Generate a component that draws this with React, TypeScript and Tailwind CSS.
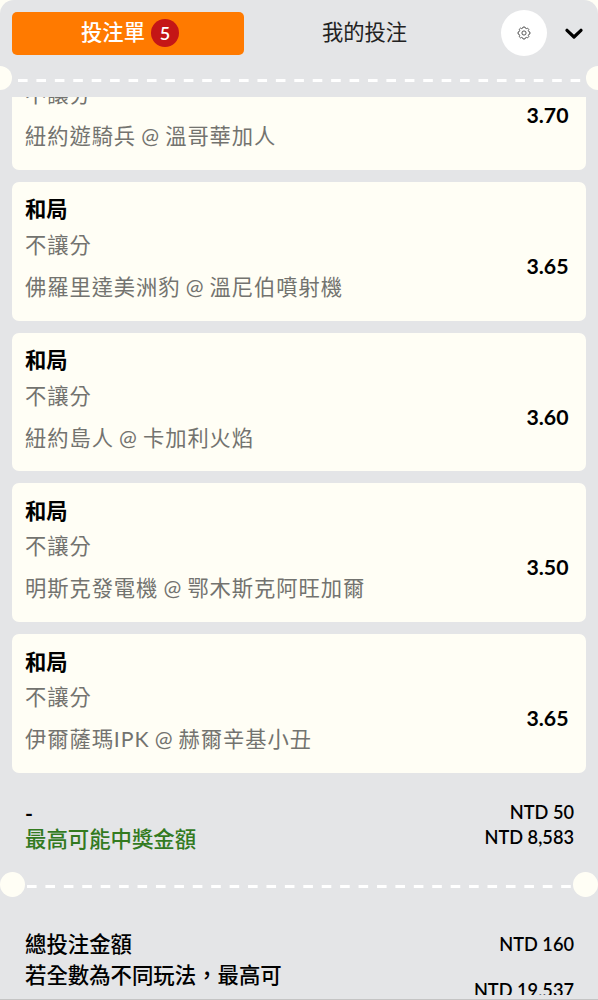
import React, {useState} from 'react';

const bets = [
    {pick: '和局', market: '不讓分', match: '紐約遊騎兵 @ 溫哥華加人', odds: '3.70'},
    {pick: '和局', market: '不讓分', match: '佛羅里達美洲豹 @ 溫尼伯噴射機', odds: '3.65'},
    {pick: '和局', market: '不讓分', match: '紐約島人 @ 卡加利火焰', odds: '3.60'},
    {pick: '和局', market: '不讓分', match: '明斯克發電機 @ 鄂木斯克阿旺加爾', odds: '3.50'},
    {pick: '和局', market: '不讓分', match: '伊爾薩瑪IPK @ 赫爾辛基小丑', odds: '3.65'},
];

function GearIcon() {
    return (
        <svg viewBox="0 0 14 14" className="size-3.5" fill="none" stroke="#444" strokeWidth="0.9" strokeLinejoin="round">
            <path d="M5.7 2.1 6.1 1h1.8l.4 1.1 1.1.5 1.1-.5 1.3 1.3-.5 1.1.5 1.1 1.1.4v2l-1.1.4-.5 1.1.5 1.1-1.3 1.3-1.1-.5-1.1.5L7.9 13H6.1l-.4-1.1-1.1-.5-1.1.5-1.3-1.3.5-1.1-.5-1.1L1.1 8V6l1.1-.4.5-1.1-.5-1.1 1.3-1.3 1.1.5z"/>
            <circle cx="7" cy="7" r="2.1"/>
        </svg>
    );
}

// Ticket perforation: dashed line between two punched holes
function Dashes({offset}: {offset: number}) {
    return (
        <svg className="block h-[3px] w-full" aria-hidden="true">
            <line x1={offset} x2="100%" y1="1.5" y2="1.5" stroke="#fff" strokeWidth="3" strokeDasharray="9.6 8.82"/>
        </svg>
    );
}

function BetCard({bet}: {bet: (typeof bets)[number]}) {
    return (
        <div className="flex h-[138.8px] shrink-0 items-center justify-between rounded-[7px] bg-[#fffef5] pr-[17.5px] pl-[13px]">
            <div className="flex h-full flex-col pt-[11.6px] text-[21.3px] text-[#73736f]">
                <div className="h-[34.4px] leading-[32px] font-semibold text-black">{bet.pick}</div>
                <div className="h-[42px] leading-[34px] tracking-[0.9px]">{bet.market}</div>
                <div className="leading-[34px] tracking-[0.92px] [word-spacing:-1.2px]">{bet.match}</div>
            </div>
            <div className="pt-[29px] text-[21.3px] leading-[30px] font-bold text-black">{bet.odds}</div>
        </div>
    );
}

export default function App() {
    const [tab, setTab] = useState('slip');

    return (
        <div className="h-[1000px] w-[598px] overflow-hidden bg-[#fffef5] font-['Lato','Noto_Sans_CJK_TC',sans-serif] text-black">
            <div className="flex h-full flex-col overflow-hidden rounded-t-[14px] border-b border-[#c4c4c4] bg-[#e4e5e7]">
                <header className="flex h-[66px] shrink-0 items-center pl-3">
                    <button
                        onClick={() => setTab('slip')}
                        className="flex h-[43px] w-[232px] items-center justify-center gap-[6px] rounded-[5px] bg-[#ff7a00] pl-[4px] text-[21.3px] font-medium text-white"
                    >
                        <span>投注單</span>
                        <span className="flex size-7 items-center justify-center rounded-full bg-[#c41616] text-[18px] font-semibold">5</span>
                    </button>
                    <button onClick={() => setTab('mine')} className="w-[241px] text-[21.3px] text-[#222]" aria-pressed={tab === 'mine'}>
                        我的投注
                    </button>
                    <button className="ml-4 flex size-[46px] items-center justify-center rounded-full bg-white" aria-label="設定">
                        <GearIcon/>
                    </button>
                    <button className="ml-[18px] pt-[2px]" aria-label="收合">
                        <svg viewBox="0 0 18 12" className="h-3 w-[18px]" fill="none" stroke="#000" strokeWidth="3.2" strokeLinecap="round" strokeLinejoin="round">
                            <path d="M2 2.3 9 9l7-6.7"/>
                        </svg>
                    </button>
                </header>

                <div className="flex h-[31px] shrink-0 items-start">
                    <div className="-ml-3 size-6 shrink-0 rounded-full bg-[#fffef5]"/>
                    <div className="mt-[13px] min-w-0 flex-1">
                        <Dashes offset={6}/>
                    </div>
                    <div className="-mr-3 size-6 shrink-0 rounded-full bg-[#fffef5]"/>
                </div>

                <main className="flex h-[676px] shrink-0 flex-col justify-end gap-3 overflow-hidden px-3">
                    {bets.map((bet, i) => (
                        <BetCard key={i} bet={bet}/>
                    ))}
                </main>

                <div className="flex h-[99px] shrink-0 justify-between pt-[27px] pr-6 pl-[25px]">
                    <div className="text-[21.4px] font-medium">
                        <div className="h-[25px] leading-[26px] font-bold">-</div>
                        <div className="leading-[28px] text-[#337a1f]">最高可能中獎金額</div>
                    </div>
                    <div className="text-right text-[18.2px] leading-[25px] font-semibold">
                        <div>NTD 50</div>
                        <div>NTD 8,583</div>
                    </div>
                </div>

                <div className="flex h-[25px] shrink-0">
                    <div className="size-[25px] shrink-0 rounded-full bg-[#fffef5]"/>
                    <div className="mt-[13px] min-w-0 flex-1">
                        <Dashes offset={2}/>
                    </div>
                    <div className="size-[25px] shrink-0 rounded-full bg-[#fffef5]"/>
                </div>

                <div className="flex h-[98px] shrink-0 justify-between overflow-hidden pr-6 pl-[25px]">
                    <div className="pt-[32px] text-[21.4px] leading-[31px] font-medium">
                        <div>總投注金額</div>
                        <div>若全數為不同玩法，最高可</div>
                    </div>
                    <div className="pt-[34px] text-right text-[18.2px] leading-[26px] font-semibold">
                        <div className="h-[46px]">NTD 160</div>
                        <div>NTD 19,537</div>
                    </div>
                </div>
            </div>
        </div>
    );
}
